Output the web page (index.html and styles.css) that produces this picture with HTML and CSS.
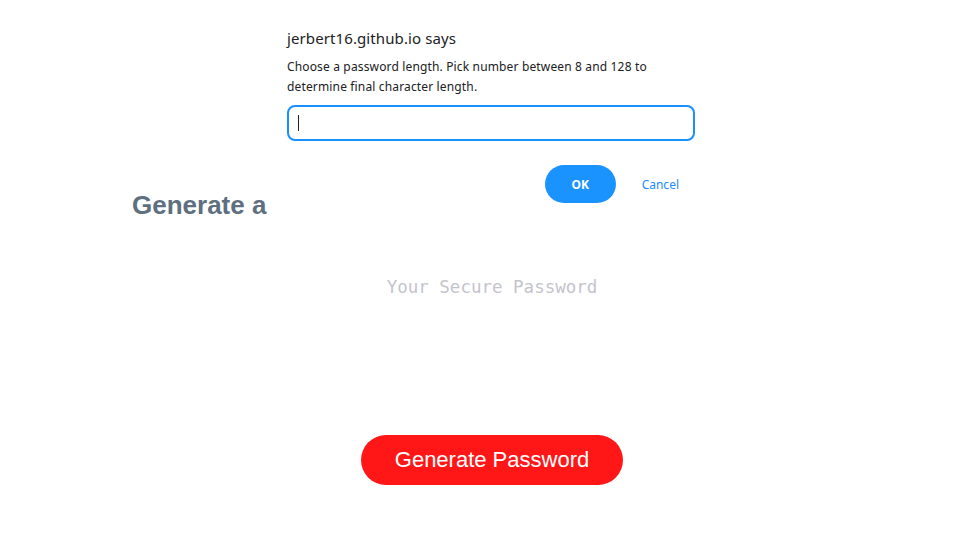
FILE: index.html
```html
<!DOCTYPE html>
<html>
<head>
<meta charset="utf-8">
<link rel="stylesheet" href="styles.css">
</head>
<body>
<div class="wrapper">
  <div class="card">
    <h2 class="card-title">Generate a Password</h2>
    <div class="card-body">
      <textarea class="password" readonly placeholder="Your Secure Password"></textarea>
    </div>
    <div class="card-footer">
      <button class="btn-generate">Generate Password</button>
    </div>
  </div>
</div>

<div class="dialog">
  <div class="dialog-title">jerbert16.github.io says</div>
  <div class="dialog-msg">Choose a password length. Pick number between 8 and 128 to determine final character length.</div>
  <div class="dialog-input"><span class="caret"></span></div>
  <div class="dialog-actions">
    <button class="btn-ok">OK</button>
    <button class="btn-cancel">Cancel</button>
  </div>
</div>
</body>
</html>
```
FILE: styles.css
```css
html, body {
  margin: 0;
  padding: 0;
  background: #ffffff;
  font-family: "Liberation Sans", Arial, sans-serif;
}
.wrapper {
  padding-top: 188px;
  padding-left: 132px;
}
.card {
  width: 720px;
  display: flex;
  flex-direction: column;
}
.card-title {
  margin: 0;
  font-size: 26px;
  font-weight: bold;
  line-height: 34px;
  color: #5e6f7f;
}
.card-body {
  display: flex;
  justify-content: center;
  padding-top: 54px;
}
.password {
  width: 720px;
  height: 130px;
  border: none;
  outline: none;
  resize: none;
  background: transparent;
  text-align: center;
  font-family: "DejaVu Sans Mono", "Liberation Mono", monospace;
  font-size: 17.5px;
  line-height: 22px;
  padding: 0;
}
.password::placeholder {
  color: #c4c4cc;
}
.card-footer {
  display: flex;
  justify-content: center;
  padding-top: 29px;
}
.btn-generate {
  width: 262px;
  height: 50px;
  border: none;
  border-radius: 25px;
  background: #ff1717;
  color: #ffffff;
  font-family: "Liberation Sans", Arial, sans-serif;
  font-size: 22px;
  padding: 0;
}

.dialog {
  position: absolute;
  top: 0;
  left: 268px;
  width: 446px;
  height: 226px;
  box-sizing: border-box;
  background: #ffffff;
  padding: 27px 19px 0 19px;
  font-family: "Noto Sans", "Open Sans", sans-serif;
  color: #202124;
}
.dialog-title {
  font-size: 15px;
  line-height: 22px;
  color: #202124;
  letter-spacing: 0.1px;
}
.dialog-msg {
  margin-top: 8px;
  font-size: 12px;
  line-height: 20px;
  width: 380px;
  letter-spacing: 0.15px;
}
.dialog-input {
  margin-top: 8px;
  height: 36px;
  box-sizing: border-box;
  border: 2px solid #1a8fff;
  border-radius: 8px;
  display: flex;
  align-items: center;
  padding-left: 9px;
}
.caret {
  width: 1px;
  height: 16px;
  background: #202124;
}
.dialog-actions {
  display: flex;
  justify-content: flex-end;
  align-items: center;
  margin-top: 24px;
  padding-right: 16px;
  gap: 26px;
}
.btn-ok {
  width: 71px;
  height: 38px;
  border: none;
  border-radius: 19px;
  background: #1a93ff;
  color: #ffffff;
  font-family: "Noto Sans", sans-serif;
  font-weight: bold;
  font-size: 12px;
  padding: 0;
}
.btn-cancel {
  border: none;
  background: none;
  padding: 0;
  color: #1a8cff;
  font-family: "Noto Sans", sans-serif;
  font-size: 12px;
}
```
